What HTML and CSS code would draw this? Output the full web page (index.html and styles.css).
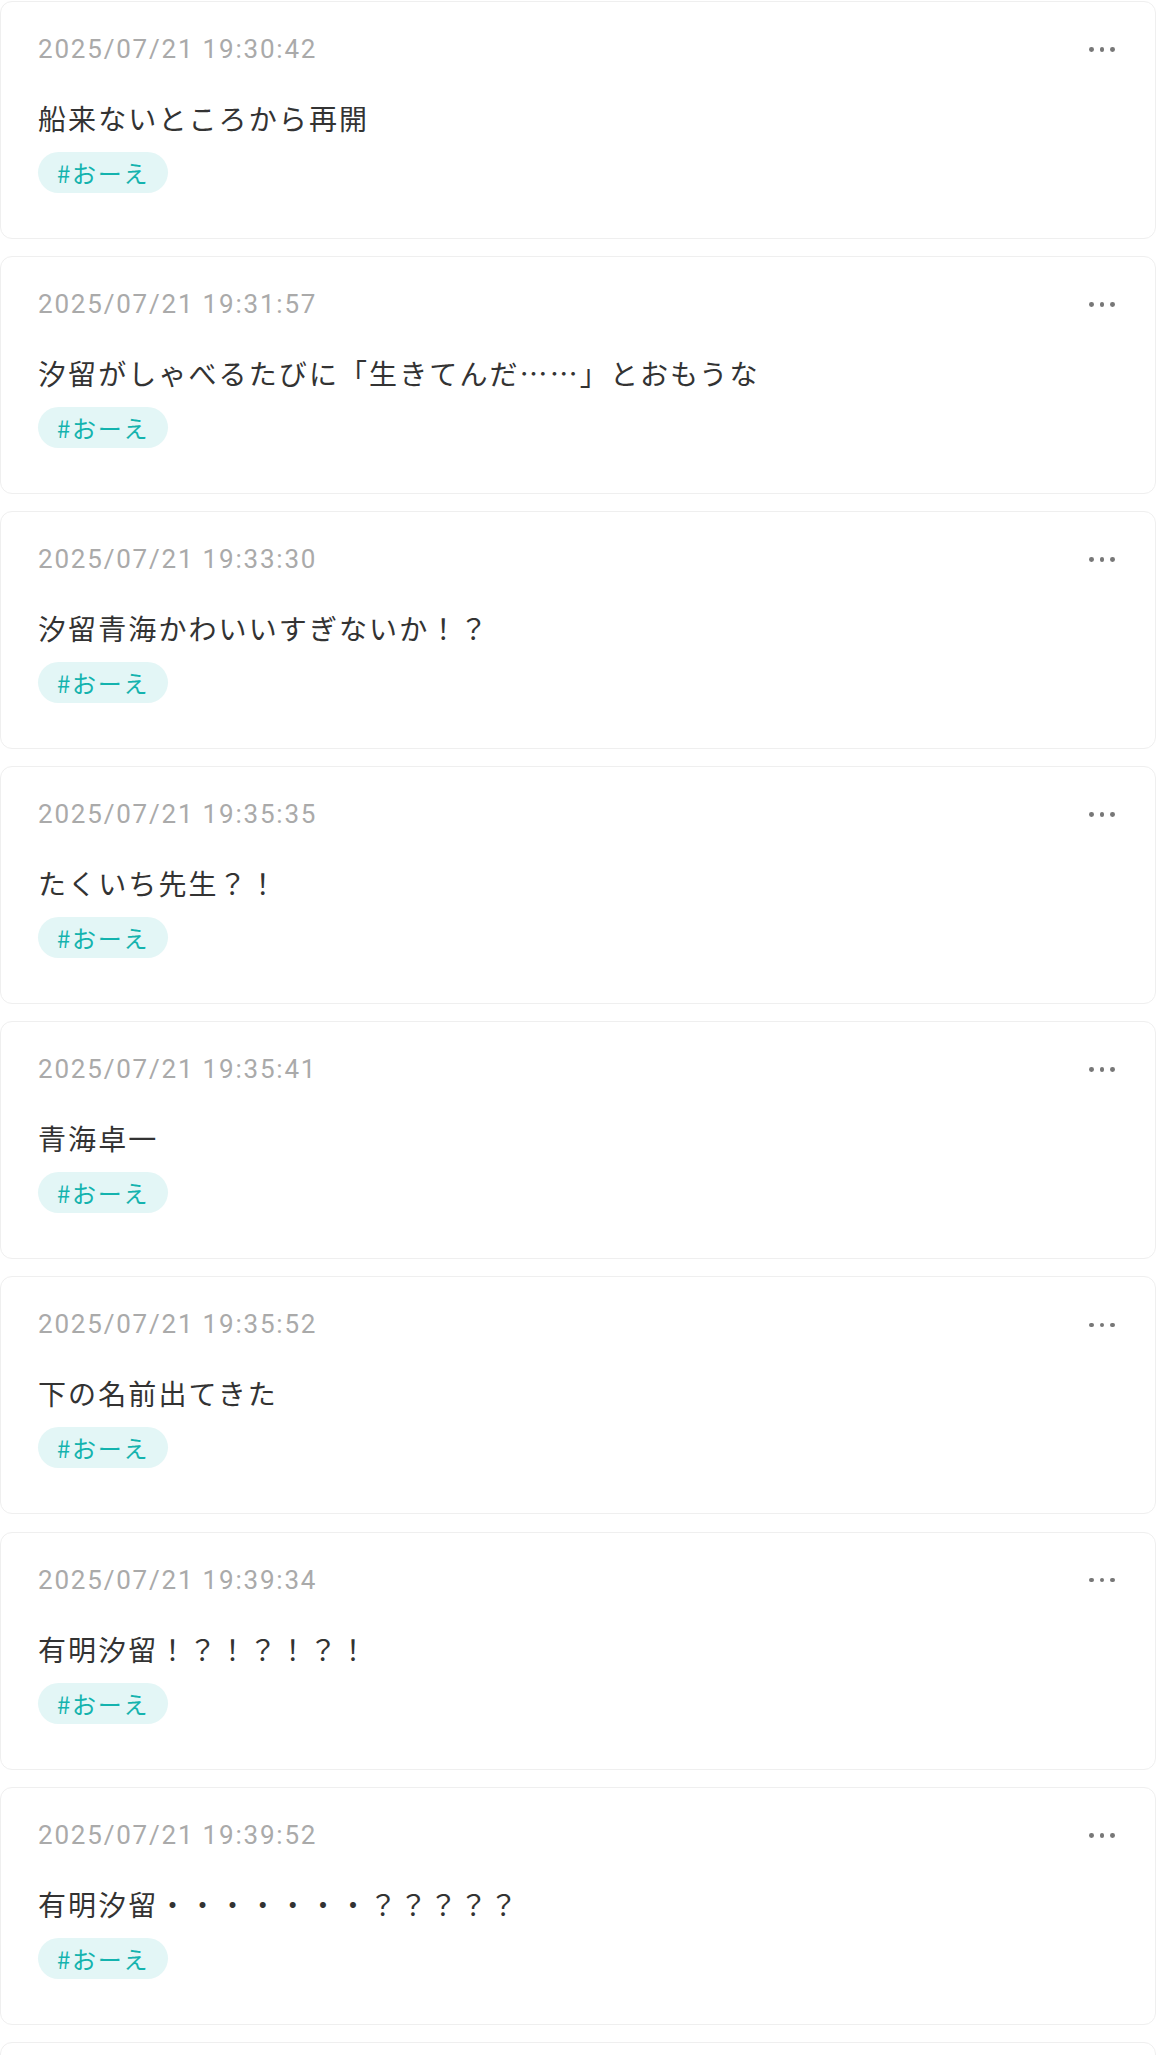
FILE: index.html
```html
<!DOCTYPE html>
<html lang="ja">
<head>
    <meta charset="UTF-8">
    <title>メモ</title>
    <link rel="stylesheet" href="styles.css">
</head>
<body>
    <ul class="memo-list">
        <li class="memo">
            <div class="memo-head">
                <span class="memo-time">2025/07/21 19:30:42</span>
                <a href="javascript:;" class="memo-more"><i></i><i></i><i></i></a>
            </div>
            <p class="memo-text">船来ないところから再開</p>
            <a href="#" class="memo-tag">#おーえ</a>
        </li>
        <li class="memo">
            <div class="memo-head">
                <span class="memo-time">2025/07/21 19:31:57</span>
                <a href="javascript:;" class="memo-more"><i></i><i></i><i></i></a>
            </div>
            <p class="memo-text">汐留がしゃべるたびに「生きてんだ……」とおもうな</p>
            <a href="#" class="memo-tag">#おーえ</a>
        </li>
        <li class="memo">
            <div class="memo-head">
                <span class="memo-time">2025/07/21 19:33:30</span>
                <a href="javascript:;" class="memo-more"><i></i><i></i><i></i></a>
            </div>
            <p class="memo-text">汐留青海かわいいすぎないか！？</p>
            <a href="#" class="memo-tag">#おーえ</a>
        </li>
        <li class="memo">
            <div class="memo-head">
                <span class="memo-time">2025/07/21 19:35:35</span>
                <a href="javascript:;" class="memo-more"><i></i><i></i><i></i></a>
            </div>
            <p class="memo-text">たくいち先生？！</p>
            <a href="#" class="memo-tag">#おーえ</a>
        </li>
        <li class="memo">
            <div class="memo-head">
                <span class="memo-time">2025/07/21 19:35:41</span>
                <a href="javascript:;" class="memo-more"><i></i><i></i><i></i></a>
            </div>
            <p class="memo-text">青海卓一</p>
            <a href="#" class="memo-tag">#おーえ</a>
        </li>
        <li class="memo">
            <div class="memo-head">
                <span class="memo-time">2025/07/21 19:35:52</span>
                <a href="javascript:;" class="memo-more"><i></i><i></i><i></i></a>
            </div>
            <p class="memo-text">下の名前出てきた</p>
            <a href="#" class="memo-tag">#おーえ</a>
        </li>
        <li class="memo">
            <div class="memo-head">
                <span class="memo-time">2025/07/21 19:39:34</span>
                <a href="javascript:;" class="memo-more"><i></i><i></i><i></i></a>
            </div>
            <p class="memo-text">有明汐留！？！？！？！</p>
            <a href="#" class="memo-tag">#おーえ</a>
        </li>
        <li class="memo">
            <div class="memo-head">
                <span class="memo-time">2025/07/21 19:39:52</span>
                <a href="javascript:;" class="memo-more"><i></i><i></i><i></i></a>
            </div>
            <p class="memo-text">有明汐留・・・・・・・？？？？？</p>
            <a href="#" class="memo-tag">#おーえ</a>
        </li>
        <li class="memo memo-empty"></li>
    </ul>
</body>
</html>
```

FILE: styles.css
```css
body{margin:0;padding-top:1px;background-color:#fff;font:28px/1.5 "Noto Sans CJK JP",sans-serif;color:#333;letter-spacing:2.1px;}
.memo-list{margin:0;padding:0;list-style-type:none;}
.memo{
    margin-bottom:17.1px;
    padding:29px 40px 45px 37px;
    border:1px solid #efefef;
    border-radius:12px;
    background-color:#fff;
}
.memo-empty{height:120px;}
.memo-head{display:flex;align-items:center;justify-content:space-between;height:36px;}
.memo-time{font:26px/36px Roboto,"Noto Sans CJK JP",sans-serif;letter-spacing:1.8px;color:#aaa;}
.memo-more{display:flex;gap:5.8px;padding:2px 0;margin-top:1px;}
.memo-more i{display:block;width:4.8px;height:4.8px;border-radius:50%;background-color:#777;}
.memo-text{margin:30px 0 0;line-height:42px;white-space:nowrap;}
.memo-tag{
    display:inline-block;
    margin-top:13px;
    height:41px;
    padding:0 19px;
    border-radius:21px;
    background-color:#e3f6f6;
    color:#14b3ae;
    font-size:24px;
    line-height:41px;
    letter-spacing:1.75px;
    text-decoration:none;
    vertical-align:top;
}
```
